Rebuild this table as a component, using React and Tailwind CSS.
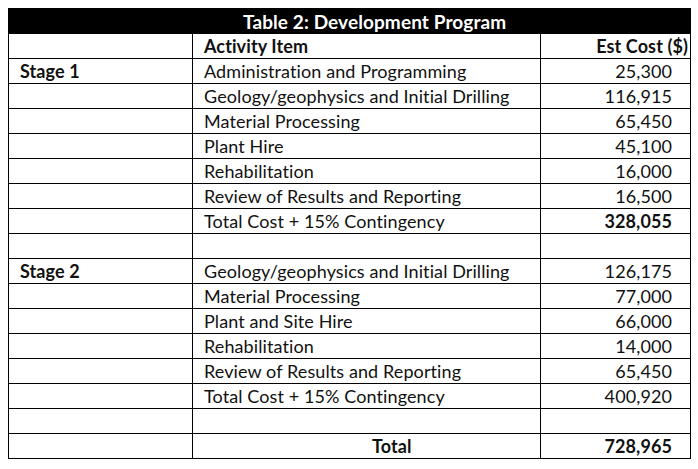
import React from "react";

const stage1 = [
  ["Administration and Programming", "25,300"],
  ["Geology/geophysics and Initial Drilling", "116,915"],
  ["Material Processing", "65,450"],
  ["Plant Hire", "45,100"],
  ["Rehabilitation", "16,000"],
  ["Review of Results and Reporting", "16,500"],
];

const stage2 = [
  ["Geology/geophysics and Initial Drilling", "126,175"],
  ["Material Processing", "77,000"],
  ["Plant and Site Hire", "66,000"],
  ["Rehabilitation", "14,000"],
  ["Review of Results and Reporting", "65,450"],
];

const Row = ({ a = "", b = "", c = "", boldA, boldC }) => (
  <tr className="h-[25px]">
    <td className={`border border-black pl-[11px] leading-none ${boldA ? "font-bold" : ""}`}>{a}</td>
    <td className="border border-black pl-[11px] leading-none">{b}</td>
    <td className={`border border-black pr-[18px] text-right leading-none ${boldC ? "font-bold" : ""}`}>{c}</td>
  </tr>
);

export default function App() {
  return (
    <div className="w-[698px] h-[469px] bg-white pt-[8px] pl-[8px] text-[#111] text-[18px] tracking-[0.1px]" style={{ fontFamily: "Lato, 'Open Sans', sans-serif" }}>
      <table className="border-collapse table-fixed w-[682px]">
        <colgroup>
          <col className="w-[184px]" />
          <col className="w-[348px]" />
          <col className="w-[150px]" />
        </colgroup>
        <tbody>
          <tr className="h-[25px]">
            <td colSpan={3} className="bg-black text-white font-bold text-[19px] pl-[234px] border border-black leading-none">
              Table 2: Development Program
            </td>
          </tr>
          <tr className="h-[25px]">
            <td className="border border-black"></td>
            <td className="border border-black pl-[11px] font-bold leading-none">Activity Item</td>
            <td className="border border-black pr-[2px] text-right font-bold leading-none">Est Cost ($)</td>
          </tr>
          {stage1.map(([b, c], i) => (
            <Row key={b} a={i === 0 ? "Stage 1" : ""} boldA b={b} c={c} />
          ))}
          <Row b="Total Cost + 15% Contingency" c="328,055" boldC />
          <Row />
          {stage2.map(([b, c], i) => (
            <Row key={b} a={i === 0 ? "Stage 2" : ""} boldA b={b} c={c} />
          ))}
          <Row b="Total Cost + 15% Contingency" c="400,920" />
          <Row />
          <tr className="h-[25px]">
            <td className="border border-black"></td>
            <td className="border border-black font-bold leading-none pl-[179px]">Total</td>
            <td className="border border-black pr-[18px] text-right font-bold leading-none">728,965</td>
          </tr>
        </tbody>
      </table>
    </div>
  );
}
